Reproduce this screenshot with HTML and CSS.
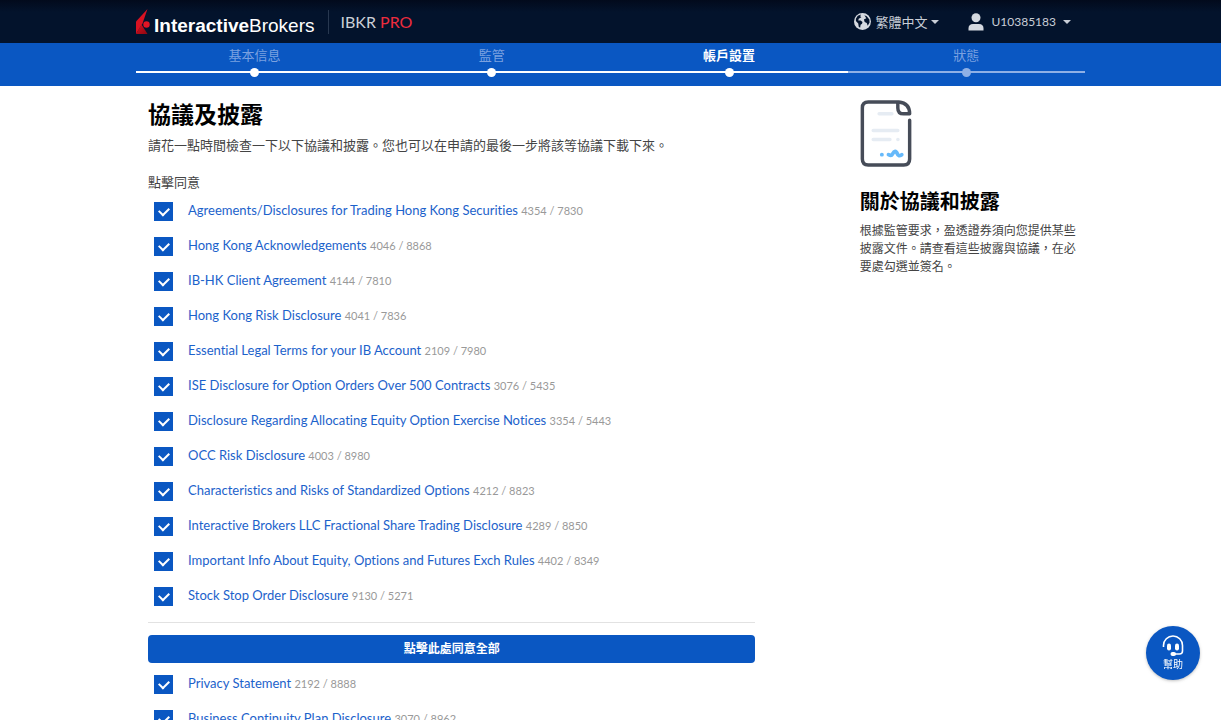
FILE: index.html
```html
<!DOCTYPE html>
<html lang="zh-Hant">
<head>
<meta charset="utf-8">
<meta name="viewport" content="width=device-width, initial-scale=1">
<title>協議及披露</title>
<link rel="stylesheet" href="styles.css">
</head>
<body>
<header class="topbar">
  <div class="container topbar-inner">
    <div class="brand">
      <svg class="brand-mark" viewBox="0 0 14 25" aria-hidden="true">
        <defs><linearGradient id="flame" x1="0" y1="0" x2="1" y2="1"><stop offset="0" stop-color="#d81222"/><stop offset="1" stop-color="#8d0710"/></linearGradient></defs>
        <path d="M11.500 0 0 12.500V25L6.500 14.500Z" fill="#d81222"/>
        <path d="M0 25 5.500 15.500 11.500 25Z" fill="url(#flame)"/>
        <circle cx="10.500" cy="15.500" r="3.200" fill="#e31425"/>
      </svg>
      <span class="brand-name"><b>Interactive</b>Brokers</span>
      <span class="brand-product">IBKR <em>PRO</em></span>
    </div>
    <nav class="tools">
      <button class="tool" type="button">
        <svg class="globe" viewBox="0 0 18 18" aria-hidden="true">
          <circle cx="9" cy="9" r="9" fill="#d5d9e0"/>
          <path d="M7.500 1.500 6.500 3.500 7.800 4.500 5 6.200 4.500 8H7L9 9.500 8.500 11.500 7 12.500 6.500 15.500 5 14.500 4.500 11 2 8.500 2 6 4 3Z M11 2.500 13.500 3.500 16.300 7 16.500 10 14.500 13.500 13.500 10.500 11.300 9.500 10.500 7 13 5.500Z" fill="#03132c"/>
        </svg>
        <span>繁體中文</span><i class="caret"></i>
      </button>
      <button class="tool tool-user" type="button">
        <svg class="person" viewBox="0 0 16 18" aria-hidden="true"><circle cx="8" cy="4.800" r="4.500" fill="#d5d9e0"/><path d="M.500 17.500V15.500Q.500 11 5 11H11Q15.500 11 15.500 15.500V17.500Z" fill="#d5d9e0"/></svg>
        <span>U10385183</span><i class="caret"></i>
      </button>
    </nav>
  </div>
</header>
<div class="progress">
  <ol class="container steps">
    <li class="step"><span>基本信息</span></li>
    <li class="step"><span>監管</span></li>
    <li class="step step-current" aria-current="step"><span>帳戶設置</span></li>
    <li class="step step-next"><span>狀態</span></li>
  </ol>
</div>
<div class="container page">
  <main class="content">
    <h1>協議及披露</h1>
    <p class="intro">請花一點時間檢查一下以下協議和披露。您也可以在申請的最後一步將該等協議下載下來。</p>
    <p class="prompt">點擊同意</p>
    <ul class="docs">
      <li><input type="checkbox" id="d1" aria-labelledby="l1" checked><div class="doc"><a id="l1" href="#d1">Agreements/Disclosures for Trading Hong Kong Securities</a> <small>4354 / 7830</small></div></li>
      <li><input type="checkbox" id="d2" aria-labelledby="l2" checked><div class="doc"><a id="l2" href="#d2">Hong Kong Acknowledgements</a> <small>4046 / 8868</small></div></li>
      <li><input type="checkbox" id="d3" aria-labelledby="l3" checked><div class="doc"><a id="l3" href="#d3">IB-HK Client Agreement</a> <small>4144 / 7810</small></div></li>
      <li><input type="checkbox" id="d4" aria-labelledby="l4" checked><div class="doc"><a id="l4" href="#d4">Hong Kong Risk Disclosure</a> <small>4041 / 7836</small></div></li>
      <li><input type="checkbox" id="d5" aria-labelledby="l5" checked><div class="doc"><a id="l5" href="#d5">Essential Legal Terms for your IB Account</a> <small>2109 / 7980</small></div></li>
      <li><input type="checkbox" id="d6" aria-labelledby="l6" checked><div class="doc"><a id="l6" href="#d6">ISE Disclosure for Option Orders Over 500 Contracts</a> <small>3076 / 5435</small></div></li>
      <li><input type="checkbox" id="d7" aria-labelledby="l7" checked><div class="doc"><a id="l7" href="#d7">Disclosure Regarding Allocating Equity Option Exercise Notices</a> <small>3354 / 5443</small></div></li>
      <li><input type="checkbox" id="d8" aria-labelledby="l8" checked><div class="doc"><a id="l8" href="#d8">OCC Risk Disclosure</a> <small>4003 / 8980</small></div></li>
      <li><input type="checkbox" id="d9" aria-labelledby="l9" checked><div class="doc"><a id="l9" href="#d9">Characteristics and Risks of Standardized Options</a> <small>4212 / 8823</small></div></li>
      <li><input type="checkbox" id="d10" aria-labelledby="l10" checked><div class="doc"><a id="l10" href="#d10">Interactive Brokers LLC Fractional Share Trading Disclosure</a> <small>4289 / 8850</small></div></li>
      <li><input type="checkbox" id="d11" aria-labelledby="l11" checked><div class="doc"><a id="l11" href="#d11">Important Info About Equity, Options and Futures Exch Rules</a> <small>4402 / 8349</small></div></li>
      <li><input type="checkbox" id="d12" aria-labelledby="l12" checked><div class="doc"><a id="l12" href="#d12">Stock Stop Order Disclosure</a> <small>9130 / 5271</small></div></li>
    </ul>
    <hr class="rule">
    <button class="agree-all" type="button">點擊此處同意全部</button>
    <ul class="docs">
      <li><input type="checkbox" id="d13" aria-labelledby="l13" checked><div class="doc"><a id="l13" href="#d13">Privacy Statement</a> <small>2192 / 8888</small></div></li>
      <li><input type="checkbox" id="d14" aria-labelledby="l14" checked><div class="doc"><a id="l14" href="#d14">Business Continuity Plan Disclosure</a> <small>3070 / 8962</small></div></li>
    </ul>
  </main>
  <aside class="about">
    <svg class="about-icon" viewBox="0 0 52 68" fill="none" stroke-linecap="round" stroke-linejoin="round" aria-hidden="true">
      <path d="M50 20.500V60Q50 66 44 66H8Q2 66 2 60V8Q2 2 8 2H39Q50 3 50 14H44Q38 14 38 8V2" stroke="#464c58" stroke-width="3.500"/>
      <path d="M19 14H32M13 31H38M13 40H30M38 40H38.200" stroke="#e6ecf3" stroke-width="3.500"/>
      <path d="M21.700 55.500H21.900M28.500 55.500Q31.500 57 32.500 55Q35.500 49.500 37.500 54.500Q38.500 58 42 55.500" stroke="#66b9fa" stroke-width="3.800"/>
    </svg>
    <h2>關於協議和披露</h2>
    <p>根據監管要求，盈透證券須向您提供某些披露文件。請查看這些披露與協議，在必要處勾選並簽名。</p>
  </aside>
</div>
<button class="help" type="button">
  <svg class="headset" viewBox="0 0 22 22" fill="none" aria-hidden="true">
    <path d="M1.500 12V10.500A9.500 9.500 0 0 1 20.500 10.500V16Q20.500 19 17.500 19H11" stroke="#fff" stroke-width="1.600"/>
    <rect x="5" y="8.500" width="4" height="7" rx="2" fill="#fff"/><rect x="13" y="8.500" width="4" height="7" rx="2" fill="#fff"/><rect x="8.500" y="17" width="5.500" height="4" rx="2" fill="#fff"/>
  </svg>
  <span>幫助</span>
</button>
</body>
</html>
```
FILE: styles.css
```css
* { box-sizing: border-box; }

body {
  margin: 0;
  background: #fff;
  color: #444;
  font-family: Lato, "Noto Sans CJK TC", sans-serif;
  font-size: 13px;
  font-variant-ligatures: none;
  line-height: 20px;
}

button { font: inherit; border: 0; cursor: pointer; }

.container {
  width: 78%;
  max-width: 949px;
  margin: 0 auto;
}

.topbar { background: linear-gradient(#020a1c, #03132c 12px); }

.topbar-inner {
  display: flex;
  justify-content: space-between;
  height: 43px;
}

.brand { display: flex; align-items: center; }
.brand-mark { width: 14px; height: 25px; }

.brand-name {
  margin-left: 4px;
  padding: 8px 13px 0 0;
  color: #fff;
  font: 19px/20px "Liberation Sans", sans-serif;
}

.brand-product {
  padding: 2px 12px;
  border-left: 1px solid #283850;
  color: #cbd0d8;
  font-size: 16px;
}

.brand-product em { color: #ed2c3e; font-style: normal; }

.tools {
  display: flex;
  align-items: center;
  gap: 29px;
  padding-right: 14px;
}

.tool {
  display: flex;
  align-items: center;
  gap: 4px;
  padding: 0;
  background: none;
  color: #c9ced7;
}

.tool-user { gap: 7px; }
.tool-user span { font-size: 12px; }
.globe { width: 17px; height: 17px; }
.person { width: 16px; height: 18px; }

.caret {
  border: 4px solid transparent;
  border-top-color: #c9ced7;
  border-bottom: 0;
}

.progress { background: #0a57c2; }

.steps {
  display: grid;
  grid-template-columns: repeat(4, 1fr);
  height: 43px;
  padding: 0;
  list-style: none;
}

.step {
  --track: #fff;
  display: flex;
  flex-direction: column;
  align-items: center;
  height: 30px;
  padding-top: 2px;
  border-bottom: 2px solid var(--track);
  color: #7ba1e0;
}

.step::after {
  content: "";
  flex: none;
  width: 9px;
  height: 9px;
  margin-top: 3px;
  border-radius: 50%;
  background: var(--track);
}

.step-current { color: #fff; font-weight: 700; }
.step-next { --track: #8fb0e6; }

.page { display: flex; justify-content: space-between; }

.content {
  width: 66%;
  padding: 12px 7px 0 12px;
}

h1, h2 { margin: 0; color: #000; font-weight: 700; }
h1 { font-size: 23px; line-height: 32px; }
h2 { margin-top: 20px; font-size: 20px; line-height: 28px; }
p { margin: 0; }
.intro { padding-top: 5px; }
.prompt { padding-top: 17px; }

.docs {
  margin: 0;
  padding: 0 0 0 6px;
  list-style: none;
}

.docs li {
  display: flex;
  align-items: flex-start;
  gap: 15px;
  height: 35px;
  padding-top: 8px;
}

.docs input {
  appearance: none;
  flex: none;
  width: 19px;
  height: 19px;
  margin: 2px 0 0;
  display: grid;
  place-items: center;
  background: #0a57c2;
}

.docs input:checked::before {
  content: "";
  width: 8px;
  height: 5px;
  border: solid #fff;
  border-width: 0 0 2px 2px;
  transform: translateY(-1px) rotate(-45deg);
}

.doc { font-size: 13px; line-height: 20px; }
.doc a { color: #1c62cb; text-decoration: none; }
.doc small { color: #999; font-size: 11px; }

.rule {
  height: 1px;
  margin: 10px 0 0;
  border: 0;
  background: #e2e2e2;
}

.agree-all {
  width: 100%;
  height: 28px;
  margin: 12px 0 2px;
  border-radius: 4px;
  background: #0a57c2;
  color: #fff;
  font-size: 12px;
  font-weight: 700;
}

.about {
  width: 25%;
  padding: 14px 0 0 12px;
}

.about-icon { display: block; width: 52px; height: 67px; }
.about p { padding-top: 7px; font-size: 12px; line-height: 18px; }

.help {
  position: fixed;
  right: 21px;
  bottom: 40px;
  display: flex;
  flex-direction: column;
  align-items: center;
  justify-content: center;
  width: 54px;
  height: 54px;
  padding: 0;
  border-radius: 50%;
  background: #0a57c2;
  box-shadow: 0 1px 3px #8888;
  color: #fff;
  font-size: 10px;
  line-height: 14px;
}

.headset { width: 22px; height: 22px; }
```
